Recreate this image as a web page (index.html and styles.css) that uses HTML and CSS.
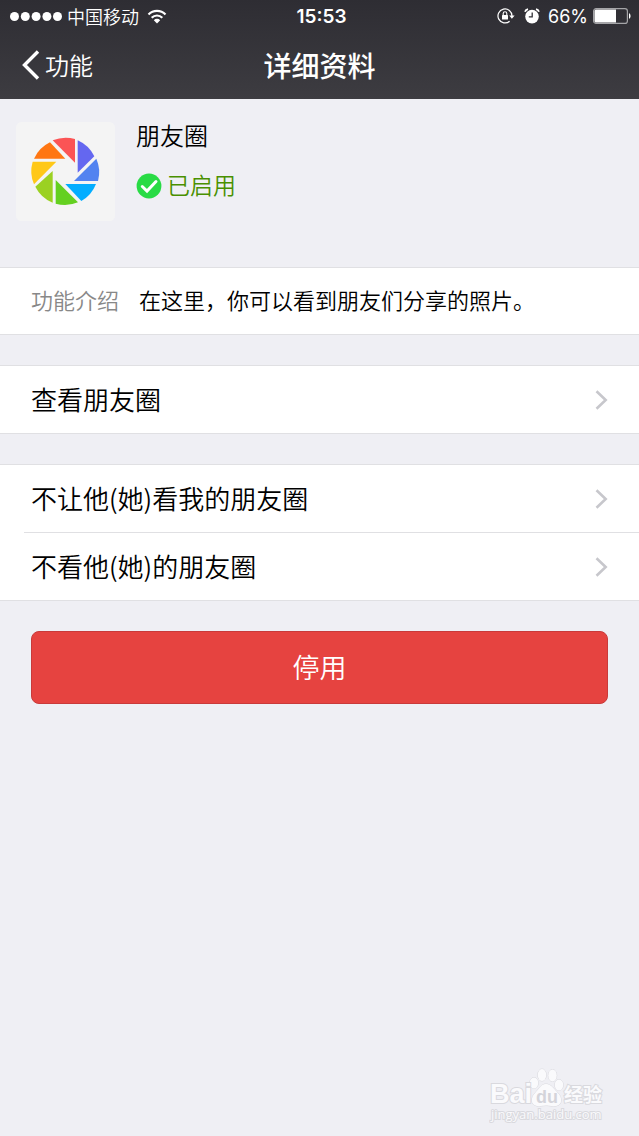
FILE: index.html
```html
<!DOCTYPE html>
<html lang="zh-CN">
<head>
<meta charset="utf-8">
<meta name="viewport" content="width=device-width, initial-scale=1">
<title>详细资料</title>
<link rel="stylesheet" href="styles.css">
</head>
<body>
<header class="header">
  <div class="status">
    <div class="status-left">
      <svg class="signal" viewBox="0 0 52 9" aria-hidden="true"><circle cx="4.5" cy="4.5" r="4.5"/><circle cx="15.3" cy="4.5" r="4.5"/><circle cx="26.1" cy="4.5" r="4.5"/><circle cx="36.9" cy="4.5" r="4.5"/><circle cx="47.5" cy="4.5" r="4.5"/></svg>
      <span>中国移动</span>
      <svg class="wifi" viewBox="0 0 20 15" aria-hidden="true"><path d="M1.5 5.5a12 12 0 0 1 17 0M4.7 8.7a7.5 7.5 0 0 1 10.6 0" fill="none" stroke="#fff" stroke-width="2.2"/><path d="M10 14.5 6.8 11.2a4.5 4.5 0 0 1 6.4 0Z" fill="#fff"/></svg>
    </div>
    <time class="clock">15:53</time>
    <div class="status-right">
      <svg class="lock" viewBox="0 0 18 16" aria-hidden="true"><path d="M12.6 13.2A7 7 0 1 1 15 8" fill="none" stroke="#fff" stroke-width="1.2"/><path d="M12.2 7.6h5.4L14.9 10.8Z" fill="#fff"/><rect x="5" y="7" width="6" height="4.6" rx=".5" fill="#fff"/><path d="M6.2 7V5.6a1.8 1.8 0 0 1 3.6 0V7" fill="none" stroke="#fff" stroke-width="1.1"/></svg>
      <svg class="alarm" viewBox="0 0 16 16" aria-hidden="true"><circle cx="8" cy="8.6" r="6.8" fill="#fff"/><path d="M1 3.8A4 4 0 0 1 4 1.2M15 3.8A4 4 0 0 0 12 1.2" fill="none" stroke="#fff" stroke-width="1.8"/><path d="M8.2 4.4v4.4H4.8" fill="none" stroke="#323137" stroke-width="1.3"/></svg>
      <span class="percent">66%</span>
      <svg class="battery" viewBox="0 0 38 16" aria-hidden="true"><rect x=".6" y=".6" width="33.8" height="14.8" rx="2.5" fill="none" stroke="#a5a5a8" stroke-width="1.2"/><path d="M3 1.5h20v13H3Q1.5 14.5 1.5 13V3Q1.5 1.5 3 1.5Z" fill="#fff"/><path d="M36 5q1.6.8 1.6 3T36 11Z" fill="#fff"/></svg>
    </div>
  </div>
  <nav class="nav">
    <a class="back" href="#"><svg class="back-icon" viewBox="0 0 18 30" aria-hidden="true"><path d="M16 1.5 2.5 15 16 28.5" fill="none" stroke="#fff" stroke-width="3.4"/></svg>功能</a>
    <h1 class="title">详细资料</h1>
  </nav>
</header>
<main>
  <section class="profile">
    <svg class="logo" viewBox="0 0 297 297" role="img" aria-label="朋友圈">
      <rect width="297" height="297" rx="16" fill="#f4f4f4"/>
      <g transform="translate(12 9)">
        <path d="M98 46A101 101 0 0 1 165 42V113Z" fill="#fb5455"/>
        <path d="M173 46A101 101 0 0 1 223 94L173 143Z" fill="#6467f0"/>
        <path d="M229 101A101 101 0 0 1 234 168H162Z" fill="#5283f0"/>
        <path d="M136 177H228A101 101 0 0 1 184 228Z" fill="#02adff"/>
        <path d="M107 165 174 232A101 101 0 0 1 107 236Z" fill="#64d020"/>
        <path d="M98 138V233A101 101 0 0 1 46 185Z" fill="#9bd122"/>
        <path d="M109 110 42 178A101 101 0 0 1 38 110Z" fill="#ffc817"/>
        <path d="M42 101A101 101 0 0 1 90 52L136 101Z" fill="#ff7612"/>
      </g>
    </svg>
    <div class="info">
      <h2 class="name">朋友圈</h2>
      <p class="state"><svg class="check" viewBox="0 0 26 26" aria-hidden="true"><circle cx="13" cy="13" r="12.4" fill="#29db45"/><path d="M6.3 13.5 11 18l9-9.5" fill="none" stroke="#fff" stroke-width="3" stroke-linecap="round"/></svg><span class="state-text">已启用</span></p>
    </div>
  </section>
  <dl class="group intro">
    <dt>功能介绍</dt>
    <dd>在这里，你可以看到朋友们分享的照片。</dd>
  </dl>
  <div class="group">
    <a class="row" href="#"><span class="row-text">查看朋友圈</span><svg class="arrow" viewBox="0 0 13 20" aria-hidden="true"><path d="m1.5 1.2 9.2 8.8-9.2 8.8"/></svg></a>
  </div>
  <div class="group">
    <a class="row" href="#"><span class="row-text">不让他(她)看我的朋友圈</span><svg class="arrow" viewBox="0 0 13 20" aria-hidden="true"><path d="m1.5 1.2 9.2 8.8-9.2 8.8"/></svg></a>
    <a class="row" href="#"><span class="row-text">不看他(她)的朋友圈</span><svg class="arrow" viewBox="0 0 13 20" aria-hidden="true"><path d="m1.5 1.2 9.2 8.8-9.2 8.8"/></svg></a>
  </div>
  <button class="disable" type="button">停用</button>
</main>
<footer class="mark">
  <svg class="mark-logo" viewBox="0 0 118 64" role="img" aria-label="Baidu 经验 jingyan.baidu.com">
    <g class="mark-shape">
      <ellipse cx="45" cy="23" rx="4.200" ry="5.500"/><ellipse cx="53" cy="15" rx="4.200" ry="6"/><ellipse cx="63.500" cy="15.500" rx="4.200" ry="6"/><ellipse cx="70" cy="25" rx="4.200" ry="5.500"/>
      <path d="M57 24c5 0 8 5 12 9s5 12-2 13c-4 .5-7-.5-10-.5s-6 1-9 .5c-7-1-6-9-2-13s6-9 11-9Z"/>
    </g>
    <text class="mark-big" x="1" y="43">Bai</text>
    <text class="mark-du" x="47" y="43">du</text>
    <text class="mark-cn" x="75" y="42">经验</text>
    <text class="mark-url" x="2" y="59">jingyan.baidu.com</text>
  </svg>
</footer>
</body>
</html>
```

FILE: styles.css
```css
* {
  box-sizing: border-box;
}

body {
  margin: 0;
  min-height: 100vh;
  display: flex;
  flex-direction: column;
  background: #efeff4;
  color: #000;
  font-family: "Noto Sans CJK SC", sans-serif;
  font-weight: 350;
}

h1,
h2,
p,
dl,
dd {
  margin: 0;
}

a {
  color: inherit;
  text-decoration: none;
}

svg {
  flex: none;
}

.header {
  height: 99px;
  background: linear-gradient(#2e2d33, #3d3c41);
  color: #fff;
}

.status,
.nav {
  display: grid;
  grid-template-columns: 1fr auto 1fr;
  align-items: center;
}

.status {
  height: 32px;
  padding: 0 8px 0 10px;
  font-size: 18px;
  line-height: 30px;
}

.status-left,
.status-right {
  display: flex;
  align-items: center;
}

.status-left {
  gap: 5px;
}

.status-right {
  justify-content: flex-end;
  gap: 5px;
}

.signal {
  width: 52px;
  height: 9px;
  fill: #fff;
}

.wifi {
  width: 20px;
  height: 15px;
  margin-left: 3px;
}

.clock {
  padding: 2px 0 0 2px;
  font-family: Inter, sans-serif;
  font-size: 19px;
  font-weight: 600;
}

.lock {
  width: 18px;
  height: 16px;
  margin-right: 4px;
}

.alarm {
  width: 16px;
  height: 16px;
  margin-right: 3px;
}

.percent {
  padding-top: 2px;
  font-family: Inter, sans-serif;
  font-weight: 400;
}

.battery {
  width: 38px;
  height: 16px;
}

.nav {
  height: 67px;
  padding: 0 22px 2px;
}

.back {
  display: flex;
  align-items: center;
  gap: 5px;
  font-size: 24px;
}

.back-icon {
  width: 18px;
  height: 30px;
}

.title {
  font-size: 28px;
  font-weight: 500;
}

.profile {
  display: flex;
  gap: 21px;
  padding: 23px 16px 46px;
}

.logo {
  width: 99px;
  height: 99px;
}

.name {
  font-size: 24px;
  font-weight: 350;
  line-height: 26px;
}

.state {
  display: flex;
  align-items: center;
  gap: 5px;
  margin-top: 24px;
  color: #4a9000;
  font-size: 23px;
}

.state-text {
  padding-bottom: 4px;
  line-height: 24px;
}

.check {
  width: 26px;
  height: 26px;
}

.group {
  margin-bottom: 30px;
  border: solid #e0e0e3;
  border-width: 1px 0;
  background: #fff;
}

.intro {
  display: flex;
  gap: 20px;
  padding: 0 31px 4px;
  font-size: 22px;
  line-height: 62px;
}

.intro dt {
  color: #888;
}

.row {
  display: flex;
  align-items: center;
  justify-content: space-between;
  padding: 0 31px;
  font-size: 26px;
}

.row-text {
  padding-bottom: 1px;
  line-height: 66px;
}

.row + .row {
  padding-top: 1px;
  background: linear-gradient(#e0e0e3, #e0e0e3) 24px 0 / 100% 1px no-repeat;
}

.arrow {
  width: 13px;
  height: 20px;
  fill: none;
  stroke: #c7c7cc;
  stroke-width: 2.6;
}

.disable {
  display: block;
  width: calc(100% - 62px);
  height: 73px;
  margin: 0 31px;
  padding: 0 0 3px;
  border: 1px solid #c93a3a;
  border-radius: 8px;
  background: #e64340;
  color: #fff;
  font: inherit;
  font-size: 27px;
}

.mark {
  display: flex;
  justify-content: flex-end;
  margin-top: auto;
  padding: 0 32px 12px 0;
}

.mark-logo {
  width: 118px;
  height: 64px;
}

.mark-shape,
.mark-big,
.mark-cn,
.mark-url {
  fill: #fafafc;
  stroke: #d9d9de;
  stroke-width: 1;
  paint-order: stroke;
}

.mark-big,
.mark-du {
  font-family: "Liberation Sans", sans-serif;
  font-weight: 700;
}

.mark-big {
  stroke-width: 2;
  font-size: 27px;
}

.mark-du {
  fill: #d4d4da;
  font-size: 18px;
}

.mark-cn {
  stroke-width: 2;
  font-family: "Noto Sans CJK SC", sans-serif;
  font-size: 19px;
  font-weight: 700;
}

.mark-url {
  stroke-width: 2;
  font-family: "Open Sans", sans-serif;
  font-size: 13px;
  font-weight: 400;
}
```
